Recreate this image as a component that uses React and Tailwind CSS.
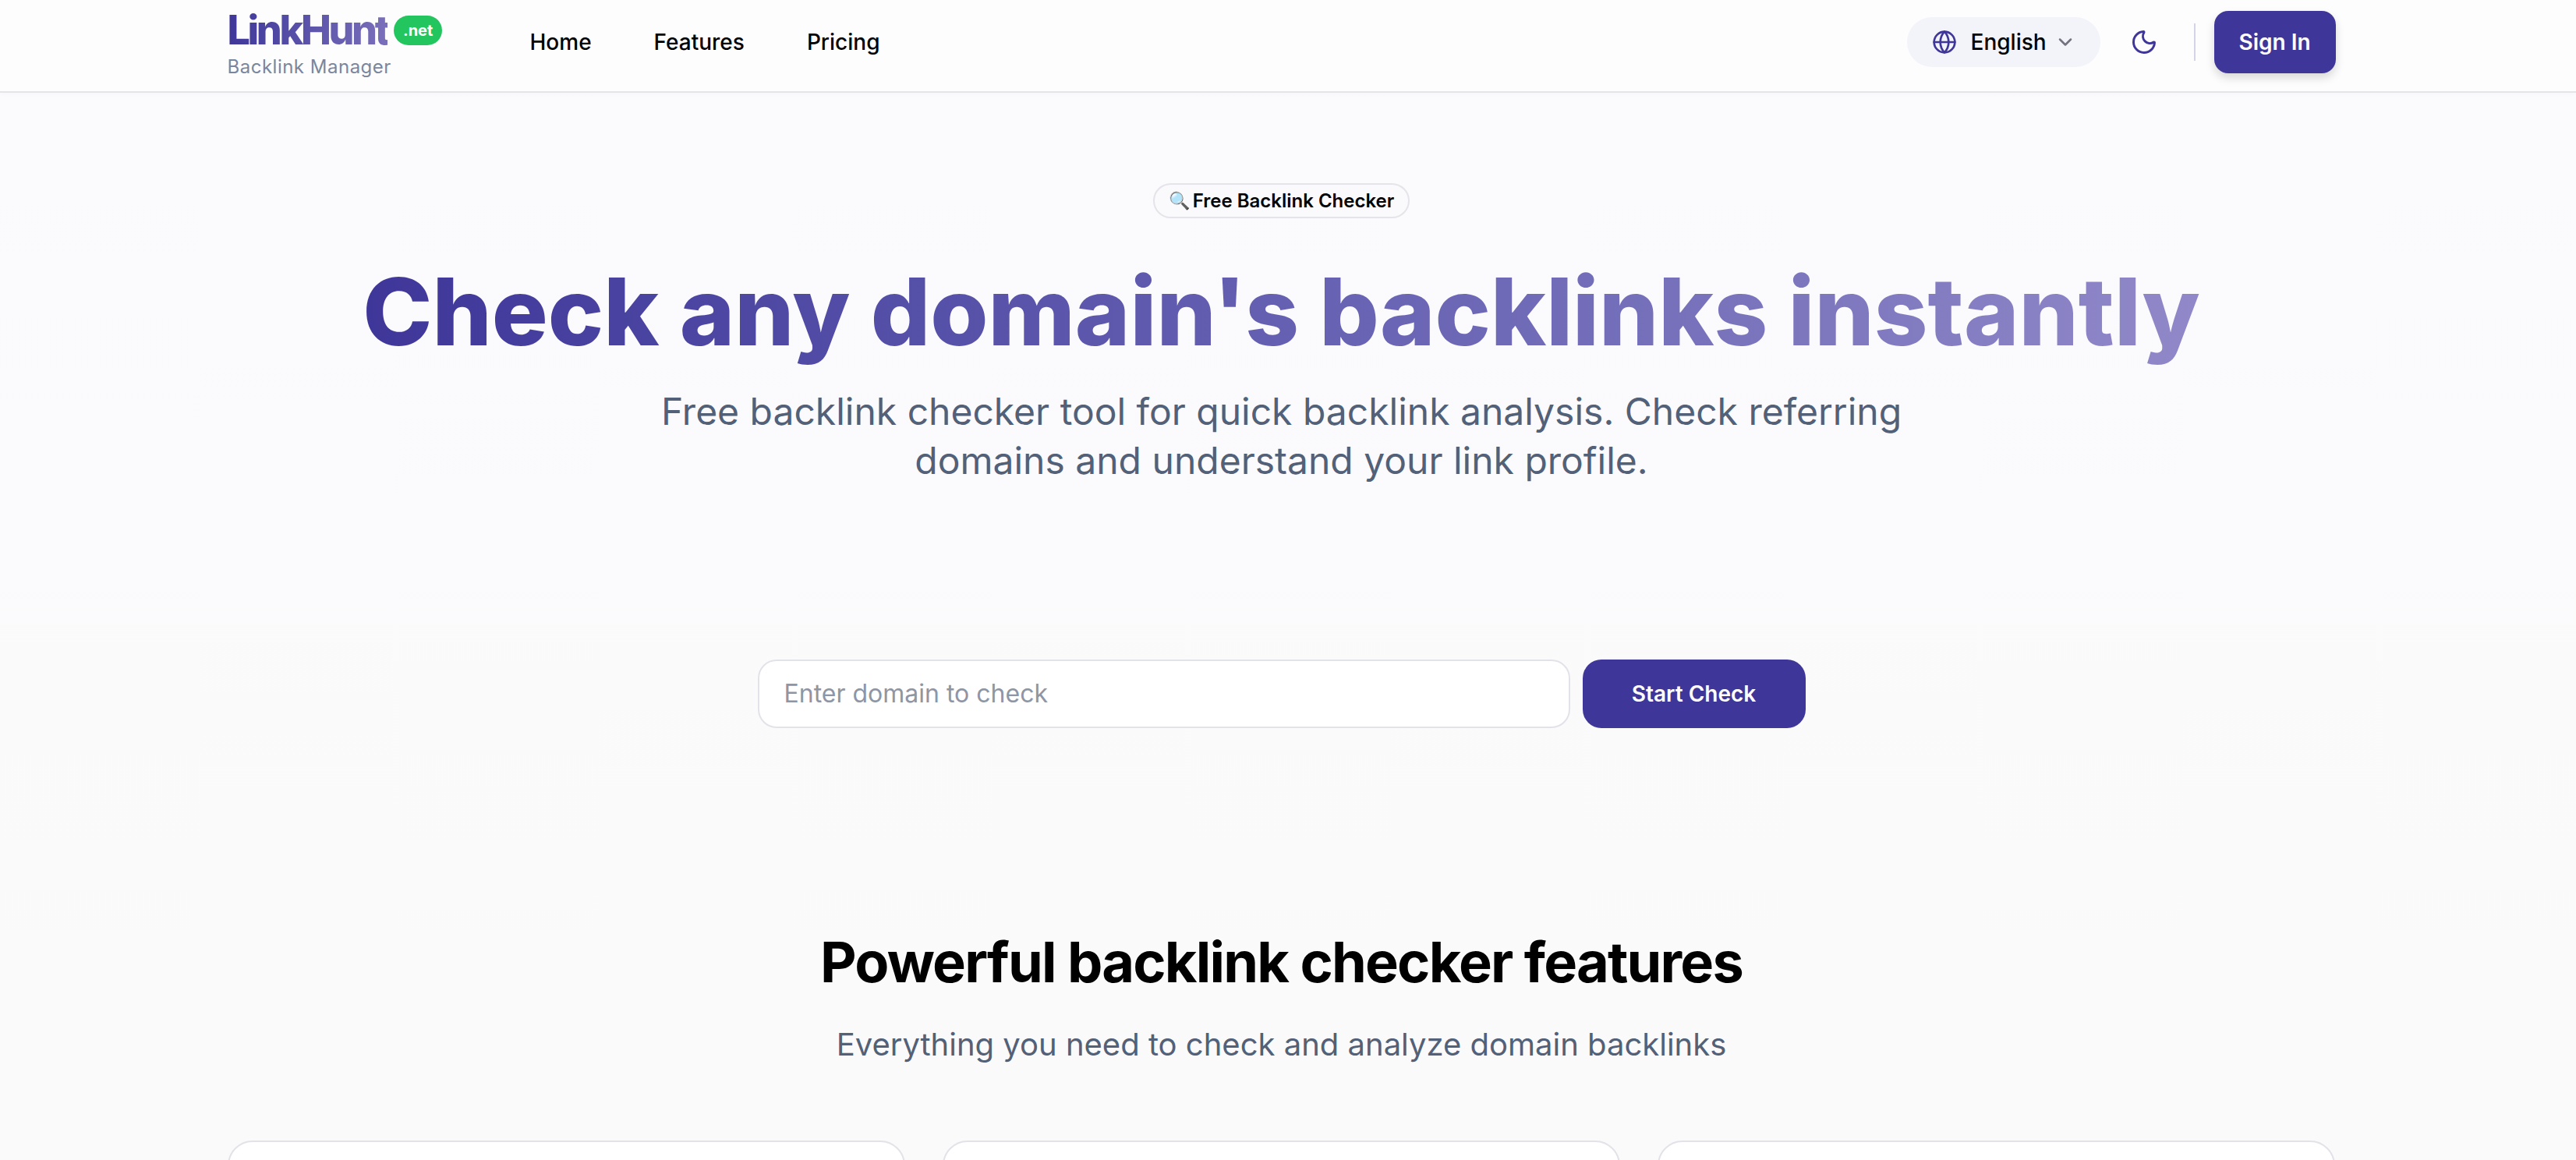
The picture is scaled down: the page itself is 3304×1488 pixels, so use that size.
import React from "react";
import { Globe, ChevronDown, Moon } from "lucide-react";

export default function App() {
  return (
    <div className="h-[1488px] overflow-hidden bg-gradient-to-b from-[#fbfbfe] to-[#fafafa] font-['Inter','Noto_Sans',sans-serif] text-black">
      <header className="h-[119px] pr-[17px] bg-[#fdfdfe] border-b-2 border-[#e4e4ea] shadow-[0_2px_6px_rgba(0,0,0,0.02)]">
        <div className="w-[2704px] h-full mx-auto flex items-center justify-between">
          <div className="flex items-center">
            <div className="w-[388px] mb-[4px] flex flex-col">
              <div className="flex items-center gap-[8px]">
                <span className="text-[52px] leading-[52px] font-extrabold tracking-[-3.4px] bg-gradient-to-r from-[#3f3699] to-[#7a6fba] bg-clip-text text-transparent">LinkHunt</span>
                <span className="h-[38px] w-[62px] rounded-full bg-[#22c55e] text-white text-[20px] font-bold flex items-center justify-center">.net</span>
              </div>
              <span className="text-[24px] leading-[30px] mt-[6px] text-[#7a869c] tracking-[0.5px]">Backlink Manager</span>
            </div>
            <nav className="mb-[10px] flex items-center gap-[80px] text-[28px] font-medium">
              <span>Home</span>
              <span>Features</span>
              <span>Pricing</span>
            </nav>
          </div>
          <div className="mb-[9px] flex items-center">
            <div className="h-[64px] w-[248px] pl-[32px] rounded-full bg-[#f3f3fa] flex items-center text-[28px] font-medium">
              <Globe className="w-[32px] h-[32px] text-[#3f3699]" strokeWidth={2} />
              <span className="ml-[18px]">English</span>
              <ChevronDown className="ml-[10px] w-[28px] h-[28px] text-[#737380]" strokeWidth={2.2} />
            </div>
            <Moon className="ml-[38px] w-[36px] h-[36px] text-[#3f3699]" strokeWidth={2} />
            <div className="ml-[46px] w-[2px] h-[48px] bg-[#d4d3e8]" />
            <button className="ml-[24px] h-[80px] w-[156px] rounded-[18px] bg-[#3f3699] text-white text-[28px] font-semibold shadow-[0_6px_12px_rgba(0,0,0,0.15)]">Sign In</button>
          </div>
        </div>
      </header>

      <main className="pr-[17px] flex flex-col items-center">
        <div className="mt-[116px] h-[45px] px-[18px] rounded-full border-2 border-[#e4e4ea] bg-[#fafafc] flex items-center gap-[4px] text-[24px] font-semibold">
          <span className="text-[22px]">🔍</span>
          <span>Free Backlink Checker</span>
        </div>
        <h1 className="mt-[45px] text-[120px] leading-[150px] font-extrabold bg-gradient-to-r from-[#3f3699] to-[#9088c8] bg-clip-text text-transparent">Check any domain's backlinks instantly</h1>
        <p className="w-[1700px] mt-[21px] text-center text-[48px] leading-[63px] text-[#526078]">Free backlink checker tool for quick backlink analysis. Check referring domains and understand your link profile.</p>

        <div className="mt-[224px] flex items-center gap-[16px]">
          <div className="w-[1042px] h-[88px] rounded-[24px] border-2 border-[#e2e2e9] bg-white flex items-center px-[32px] text-[32px] text-[#8e96a5]">Enter domain to check</div>
          <button className="w-[286px] h-[88px] rounded-[24px] bg-[#3f3699] text-white text-[28px] font-semibold">Start Check</button>
        </div>

        <h2 className="mt-[260px] text-[72px] leading-[80px] font-bold tracking-[-1.8px]">Powerful backlink checker features</h2>
        <p className="mt-[38px] text-[40px] leading-[56px] text-[#526078]">Everything you need to check and analyze domain backlinks</p>

        <div className="mt-[95px] w-[2704px] grid grid-cols-3 gap-[48px]">
          <div className="h-[200px] rounded-[32px] border-2 border-[#e2e2e9] bg-white" />
          <div className="h-[200px] rounded-[32px] border-2 border-[#e2e2e9] bg-white" />
          <div className="h-[200px] rounded-[32px] border-2 border-[#e2e2e9] bg-white" />
        </div>
      </main>
    </div>
  );
}
